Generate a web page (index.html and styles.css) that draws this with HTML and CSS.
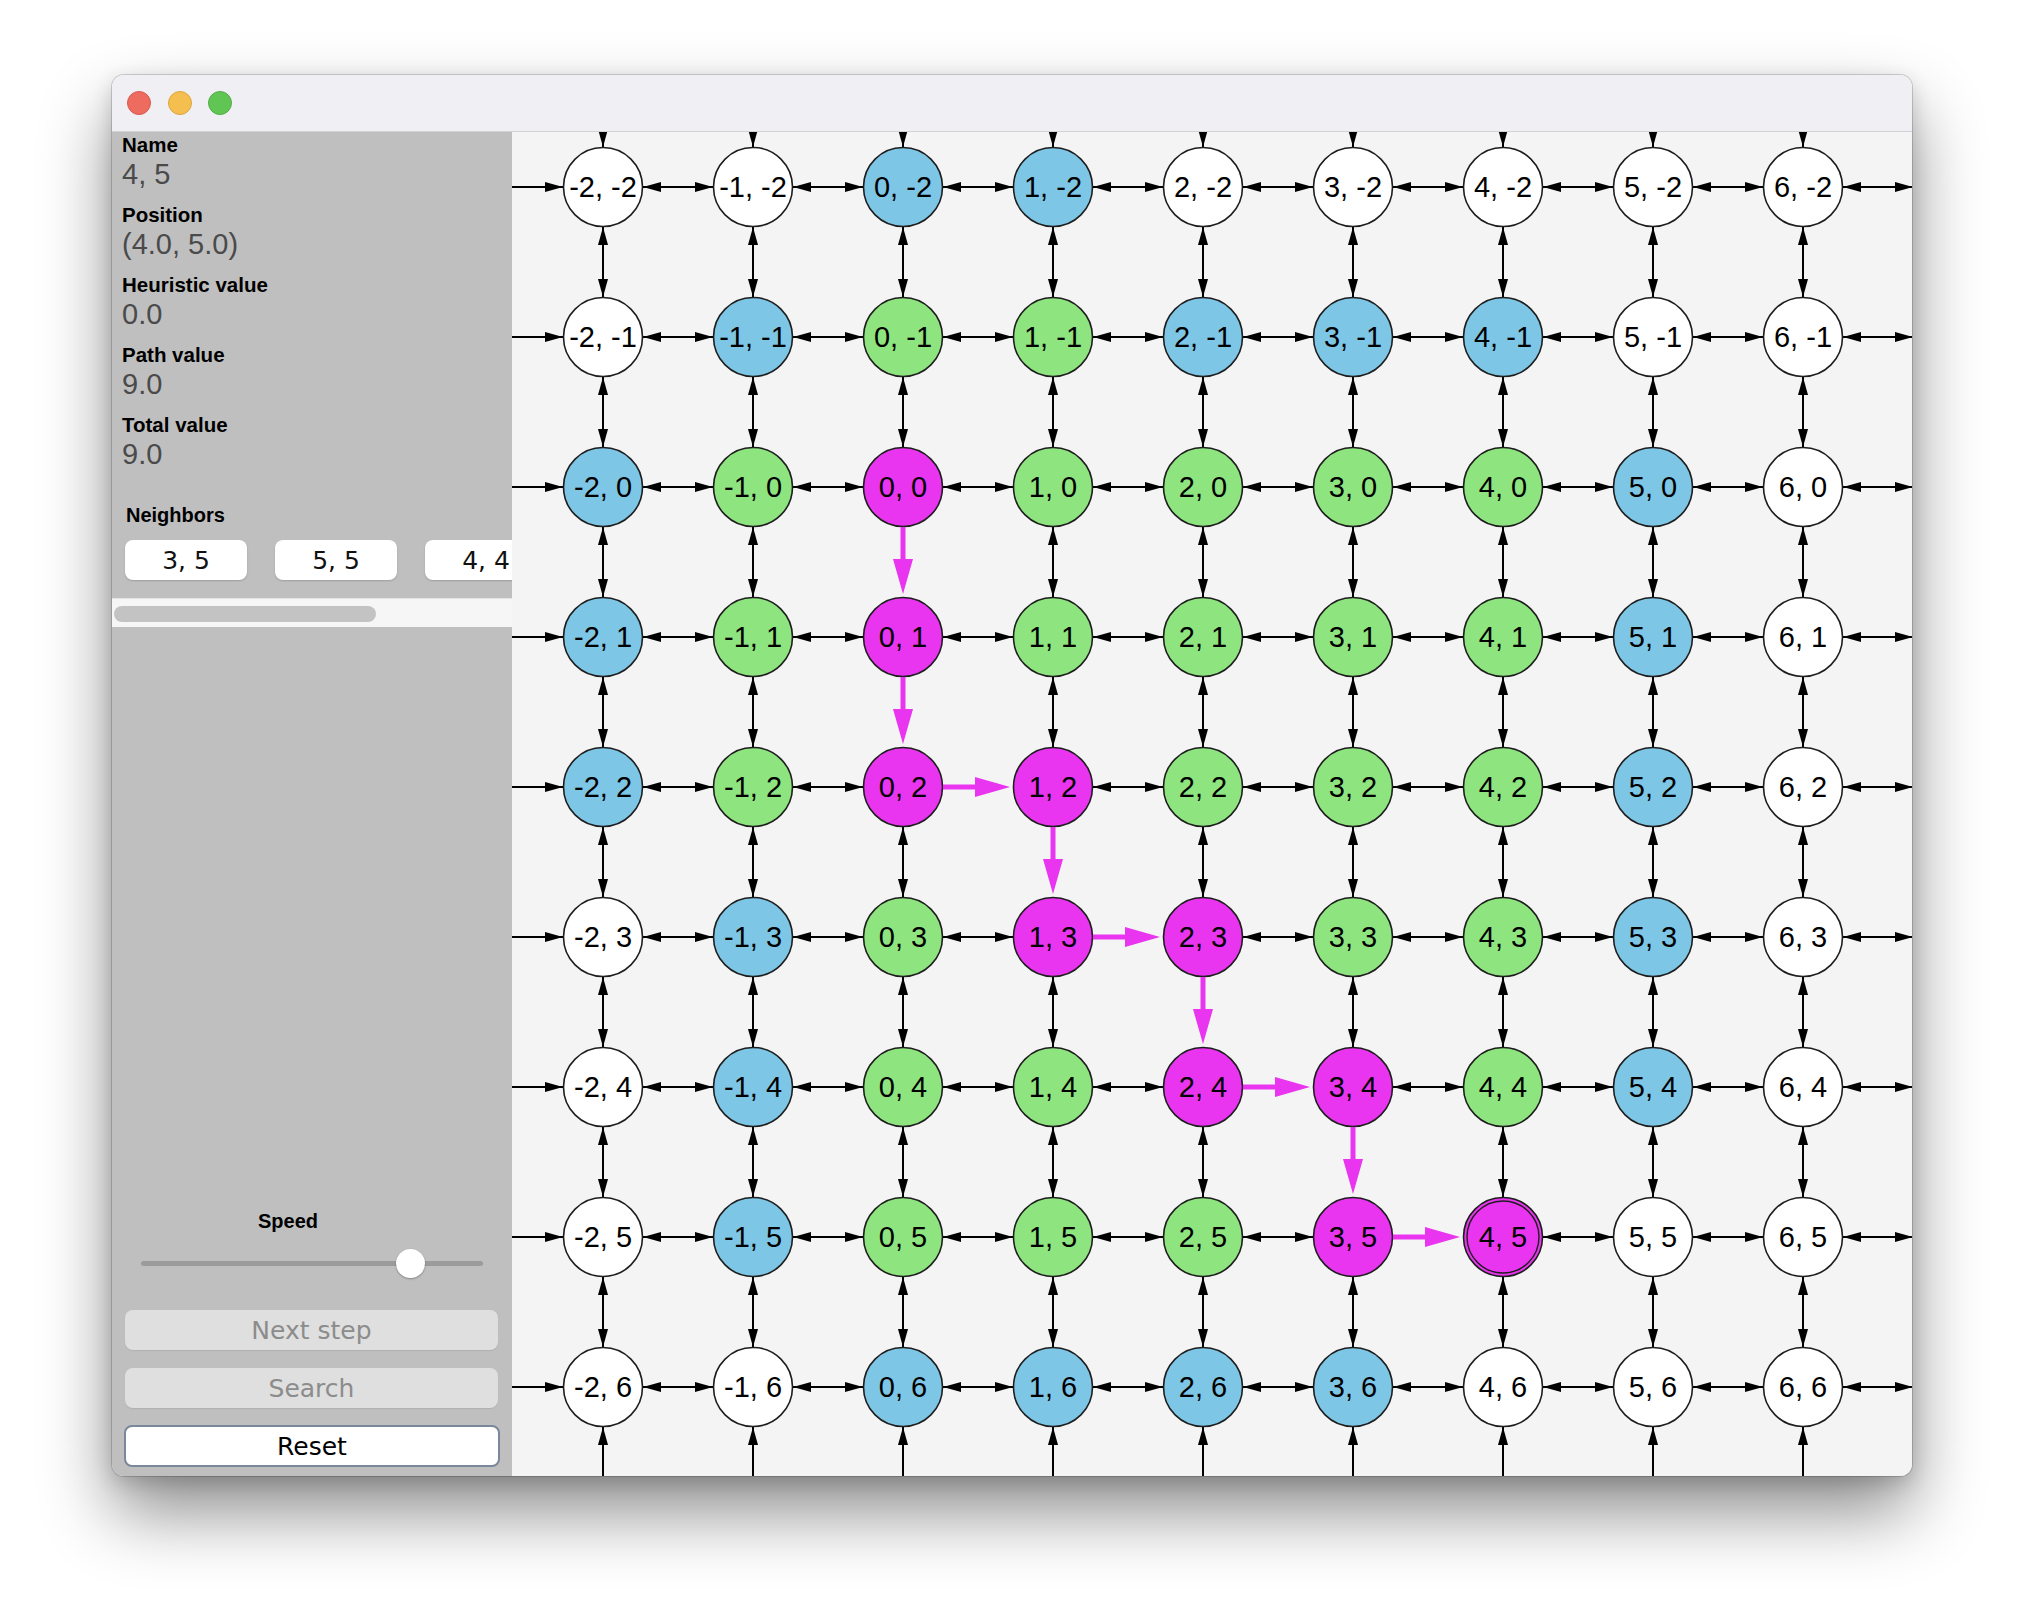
FILE: index.html
```html
<!DOCTYPE html>
<html lang="en">
<head>
<meta charset="utf-8">
<title>A* Search</title>
<link rel="stylesheet" href="styles.css">
</head>
<body>
<div class="window">
  <div class="titlebar">
    <span class="light red"></span>
    <span class="light yellow"></span>
    <span class="light green"></span>
  </div>
  <div class="content">
    <aside class="sidebar">
      <div class="info">
        <div class="field"><div class="label">Name</div><div class="value">4, 5</div></div>
        <div class="field"><div class="label">Position</div><div class="value">(4.0, 5.0)</div></div>
        <div class="field"><div class="label">Heuristic value</div><div class="value">0.0</div></div>
        <div class="field"><div class="label">Path value</div><div class="value">9.0</div></div>
        <div class="field"><div class="label">Total value</div><div class="value">9.0</div></div>
      </div>
      <div class="neighbors">
        <div class="neighbors-title">Neighbors</div>
        <div class="neighbor-list">
          <button class="nbtn">3, 5</button>
          <button class="nbtn">5, 5</button>
          <button class="nbtn">4, 4</button>
        </div>
        <div class="hscroll"><div class="thumb"></div></div>
      </div>
      <div class="spacer"></div>
      <div class="speed">Speed</div>
      <div class="slider"><div class="track"></div><div class="knob"></div></div>
      <button class="btn disabled">Next step</button>
      <button class="btn disabled search">Search</button>
      <button class="btn reset">Reset</button>
    </aside>
    <main class="canvas">
      <svg id="graph" width="1400" height="1344" viewBox="0 0 1400 1344"></svg>
    </main>
  </div>
</div>
<script src="script.js"></script>
</body>
</html>
```

FILE: styles.css
```css
* { box-sizing: border-box; }
html, body { margin: 0; padding: 0; background: #ffffff; }
body {
  min-height: 1624px;
  padding: 75px 0 0 112px;
  font-family: "Liberation Sans", Arial, sans-serif;
}
.window {
  width: 1800px;
  height: 1401px;
  border-radius: 12px;
  overflow: hidden;
  display: flex;
  flex-direction: column;
  box-shadow: 0 0 0 1px rgba(0,0,0,0.16), 0 36px 70px rgba(0,0,0,0.45), 0 6px 20px rgba(0,0,0,0.16);
  background: #f4f4f4;
}
.titlebar {
  height: 57px;
  flex: none;
  background: #f0eff4;
  border-bottom: 1px solid #d2d2d6;
  display: flex;
  align-items: center;
  gap: 16.5px;
  padding-left: 15px;
  padding-bottom: 1px;
}
.light {
  width: 24px;
  height: 24px;
  border-radius: 50%;
  display: block;
}
.red { background: #ee6b5f; border: 1px solid #d85a4f; }
.yellow { background: #f5bf4f; border: 1px solid #dba73e; }
.green { background: #61c554; border: 1px solid #51ad45; }
.content {
  flex: 1;
  display: flex;
  min-height: 0;
}
.sidebar {
  width: 400px;
  flex: none;
  background: #bfbfbf;
  display: flex;
  flex-direction: column;
  padding-bottom: 9px;
}
.info { padding: 1px 0 0 10px; }
.field { margin-bottom: 12px; }
.label {
  font-weight: bold;
  font-size: 20.5px;
  line-height: 24px;
  color: #000;
}
.value {
  font-size: 29px;
  line-height: 34px;
  color: #4a4a4a;
}
.neighbors { margin-top: 20px; }
.neighbors-title {
  padding-left: 14px;
  font-weight: bold;
  font-size: 20px;
  line-height: 24px;
  color: #000;
}
.neighbor-list {
  margin-top: 13px;
  padding-left: 13px;
  display: flex;
  gap: 28px;
  overflow: hidden;
  padding-bottom: 2px;
}
.nbtn {
  flex: none;
  width: 122px;
  height: 40px;
  border: none;
  border-radius: 8px;
  background: #ffffff;
  box-shadow: 0 1px 2px rgba(0,0,0,0.18);
  font-family: "DejaVu Sans", "Liberation Sans", sans-serif;
  font-size: 25px;
  color: #111;
  padding: 0;
}
.hscroll {
  margin-top: 16px;
  height: 29px;
  background: #f6f6f6;
  border-top: 1px solid #e4e4e4;
  padding: 7px 0 0 2px;
}
.thumb {
  width: 262px;
  height: 16px;
  border-radius: 8px;
  background: #c3c3c3;
}
.spacer { flex: 1; }
.speed {
  font-weight: bold;
  font-size: 20px;
  line-height: 24px;
  text-align: center;
  padding-right: 48px;
  color: #000;
}
.slider {
  position: relative;
  height: 30px;
  margin: 15px 29px 32px 29px;
  display: flex;
  align-items: center;
}
.track {
  flex: 1;
  height: 5px;
  border-radius: 3px;
  background: #9b9b9b;
}
.knob {
  position: absolute;
  left: 255px;
  top: 1px;
  width: 29px;
  height: 29px;
  border-radius: 50%;
  background: #ffffff;
  box-shadow: 0 1px 2px rgba(0,0,0,0.3);
}
.btn {
  height: 40px;
  margin: 0 14px 0 13px;
  border-radius: 8px;
  font-family: "DejaVu Sans", "Liberation Sans", sans-serif;
  font-size: 25px;
  padding: 0;
}
.btn.disabled {
  background: #dfdfdf;
  color: #8c8c8c;
  border: none;
  box-shadow: 0 1px 1px rgba(0,0,0,0.08);
}
.btn.search { margin-top: 18px; }
.btn.reset {
  margin: 17px 12px 0 12px;
  height: 42px;
  background: #ffffff;
  color: #000;
  border: 2px solid #7a879c;
}
.canvas {
  flex: 1;
  overflow: hidden;
  background: #f4f4f4;
}
#graph { display: block; }
.edge { stroke: #000; stroke-width: 2; }
.head { fill: #000; }
.path-edge { stroke: #e935f0; stroke-width: 5; }
.path-head { fill: #e935f0; }
.node-circle { stroke: #1e1e1e; stroke-width: 1.6; }
.ring { fill: none; stroke: #1e1e1e; stroke-width: 1.4; }
.node-W { fill: #ffffff; }
.node-B { fill: #7ec6e6; }
.node-G { fill: #8ee57f; }
.node-M { fill: #e935f0; }
.node-label {
  font-family: "Liberation Sans", Arial, sans-serif;
  font-size: 29px;
  fill: #000;
}
```

FILE: script.js
```js
(function () {
  var NS = 'http://www.w3.org/2000/svg';
  var svg = document.getElementById('graph');
  var X0 = 91, Y0 = 55, S = 150, R = 40;
  var grid = [
    'WWBBWWWWW',
    'WBGGBBBWW',
    'BGMGGGGBW',
    'BGMGGGGBW',
    'BGMMGGGBW',
    'WBGMMGGBW',
    'WBGGMMGBW',
    'WBGGGMMWW',
    'WWBBBBWWW'
  ];
  var path = [[0,0],[0,1],[0,2],[1,2],[1,3],[2,3],[2,4],[3,4],[3,5],[4,5]];
  var pathSet = {};
  for (var i = 0; i < path.length - 1; i++) {
    var a = path[i], b = path[i + 1];
    pathSet[a.join(',') + '|' + b.join(',')] = true;
    pathSet[b.join(',') + '|' + a.join(',')] = true;
  }
  function px(c) { return X0 + (c + 2) * S; }
  function py(r) { return Y0 + (r + 2) * S; }
  function el(name, attrs, parent) {
    var e = document.createElementNS(NS, name);
    for (var k in attrs) e.setAttribute(k, attrs[k]);
    (parent || svg).appendChild(e);
    return e;
  }
  function head(tx, ty, dx, dy, len, hw, cls, parent) {
    var bx = tx - dx * len, by = ty - dy * len;
    var nx = -dy, ny = dx;
    var pts = [tx + ',' + ty,
      (bx + nx * hw) + ',' + (by + ny * hw),
      (bx - nx * hw) + ',' + (by - ny * hw)].join(' ');
    el('polygon', { points: pts, 'class': cls }, parent);
  }
  var edges = el('g', {});
  var nodes = el('g', {});
  var paths = el('g', {});
  function edge(c1, r1, c2, r2) {
    var key = c1 + ',' + r1 + '|' + c2 + ',' + r2;
    if (pathSet[key]) return;
    var x1 = px(c1), y1 = py(r1), x2 = px(c2), y2 = py(r2);
    var dx = (x2 - x1) / S, dy = (y2 - y1) / S;
    var sx = x1 + dx * R, sy = y1 + dy * R, ex = x2 - dx * R, ey = y2 - dy * R;
    el('line', { x1: sx, y1: sy, x2: ex, y2: ey, 'class': 'edge' }, edges);
    head(ex, ey, dx, dy, 18, 5, 'head', edges);
    head(sx, sy, -dx, -dy, 18, 5, 'head', edges);
  }
  for (var r = -3; r <= 7; r++) {
    for (var c = -3; c <= 7; c++) {
      if (c < 7) edge(c, r, c + 1, r);
      if (r < 7) edge(c, r, c, r + 1);
    }
  }
  for (var rr = -2; rr <= 6; rr++) {
    for (var cc = -2; cc <= 6; cc++) {
      var t = grid[rr + 2][cc + 2];
      var x = px(cc), y = py(rr);
      el('circle', { cx: x, cy: y, r: R - 0.5, 'class': 'node-circle node-' + t }, nodes);
      if (cc === 4 && rr === 5) {
        el('circle', { cx: x, cy: y, r: R - 4, 'class': 'ring' }, nodes);
      }
      var tx = el('text', { x: x, y: y + 10, 'text-anchor': 'middle', 'class': 'node-label' }, nodes);
      tx.textContent = cc + ', ' + rr;
    }
  }
  for (var j = 0; j < path.length - 1; j++) {
    var p = path[j], q = path[j + 1];
    var x1 = px(p[0]), y1 = py(p[1]), x2 = px(q[0]), y2 = py(q[1]);
    var dx = (x2 - x1) / S, dy = (y2 - y1) / S;
    var sx = x1 + dx * R, sy = y1 + dy * R;
    var tx2 = x2 - dx * (R + 3), ty2 = y2 - dy * (R + 3);
    el('line', { x1: sx, y1: sy, x2: tx2 - dx * 30, y2: ty2 - dy * 30, 'class': 'path-edge' }, paths);
    head(tx2, ty2, dx, dy, 35, 10, 'path-head', paths);
  }
})();
```
